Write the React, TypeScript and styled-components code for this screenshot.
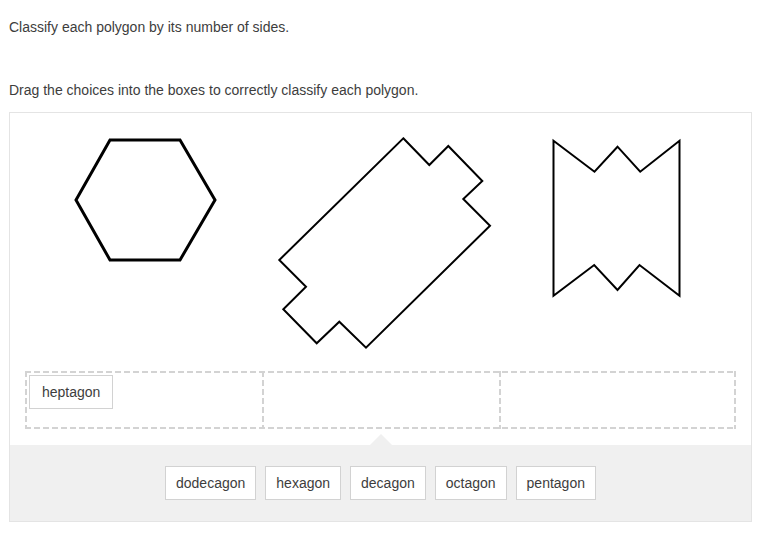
import React from "react";
import styled, { createGlobalStyle } from "styled-components";

const Global = createGlobalStyle`
  html, body { margin: 0; padding: 0; background: #ffffff; }
  body { font-family: "Liberation Sans", Arial, sans-serif; color: #333333; }
`;

const Page = styled.div`
  padding: 18px 22px 0 9px;
  width: 774px;
  box-sizing: border-box;
`;

const Prompt = styled.p<{ $gap?: number }>`
  margin: ${(p) => p.$gap ?? 0}px 0 0 0;
  font-size: 14px;
  line-height: 18px;
  color: #3d3d3d;
`;

const Panel = styled.div`
  margin-top: 13px;
  width: 743px;
  box-sizing: border-box;
  border: 1px solid #e4e4e4;
  background: #ffffff;
`;

const ShapesRow = styled.div`
  display: grid;
  grid-template-columns: repeat(3, 1fr);
  padding: 0 15px;
  height: 258px;
`;

const ShapeSvg = styled.svg`
  display: block;
  width: 237px;
  height: 258px;
`;

const dashH = "repeating-linear-gradient(90deg, #d3d3d3 0 6px, transparent 6px 9px)";
const dashV = "repeating-linear-gradient(180deg, #d3d3d3 0 6px, transparent 6px 9px)";

const Zone = styled.div`
  margin: 0 15px;
  display: grid;
  grid-template-columns: repeat(3, 1fr);
  height: 58px;
  background:
    ${dashH} left top / 100% 2px no-repeat,
    ${dashH} left bottom / 100% 2px no-repeat,
    ${dashV} left top / 2px 100% no-repeat,
    ${dashV} right top / 2px 100% no-repeat;
`;

const Cell = styled.div<{ $divider?: boolean }>`
  padding: 4px;
  box-sizing: border-box;
  background: ${(p) => (p.$divider ? `${dashV} left top / 2px 100% no-repeat` : "none")};
`;

const Chip = styled.div<{ $placed?: boolean }>`
  display: inline-flex;
  align-items: center;
  height: 34px;
  box-sizing: border-box;
  padding: 0 ${(p) => (p.$placed ? 12 : 10)}px;
  border: 1px solid #d2d2d2;
  background: #ffffff;
  font-size: 14px;
  color: #3d3d3d;
  white-space: nowrap;
`;

const Tray = styled.div`
  position: relative;
  margin-top: 16px;
  background: #f0f0f0;
  height: 76px;
  display: flex;
  justify-content: center;
  align-items: flex-start;
  padding-top: 21px;
  box-sizing: border-box;
  gap: 9px;
`;

const Notch = styled.div<{ $left: number }>`
  position: absolute;
  top: -11px;
  left: ${(p) => p.$left}px;
  width: 0;
  height: 0;
  border-left: 11px solid transparent;
  border-right: 11px solid transparent;
  border-bottom: 11px solid #f0f0f0;
`;

const shapes: { points: string; stroke: number }[] = [
  { points: "85,27 155,27 190,87 155,147 85,147 51,87", stroke: 3 },
  {
    points:
      "141.3,25.3 167.3,52 186.3,33 220.3,68 201.3,86 228,112.7 104,234.7 77.3,208.7 54.7,230.3 21.3,196.3 44,173.7 17.3,147",
    stroke: 2,
  },
  {
    points:
      "54.5,27.7 95.5,58.7 118.5,33.7 141.2,58.7 180.5,27.7 180.5,182.7 140.5,152 118.5,177 95.2,152 54.5,182.7",
    stroke: 2,
  },
];

const choices = ["dodecagon", "hexagon", "decagon", "octagon", "pentagon"];

export default function App() {
  return (
    <>
      <Global />
      <Page>
        <Prompt>Classify each polygon by its number of sides.</Prompt>
        <Prompt $gap={45}>Drag the choices into the boxes to correctly classify each polygon.</Prompt>
        <Panel>
          <ShapesRow>
            {shapes.map((s, i) => (
              <ShapeSvg key={i} viewBox="0 0 237 258">
                <polygon
                  points={s.points}
                  fill="none"
                  stroke="#000"
                  strokeWidth={s.stroke}
                  strokeLinejoin="miter"
                />
              </ShapeSvg>
            ))}
          </ShapesRow>
          <Zone>
            <Cell>
              <Chip $placed>heptagon</Chip>
            </Cell>
            <Cell $divider />
            <Cell $divider />
          </Zone>
          <Tray>
            <Notch $left={360} />
            {choices.map((c) => (
              <Chip key={c}>{c}</Chip>
            ))}
          </Tray>
        </Panel>
      </Page>
    </>
  );
}
